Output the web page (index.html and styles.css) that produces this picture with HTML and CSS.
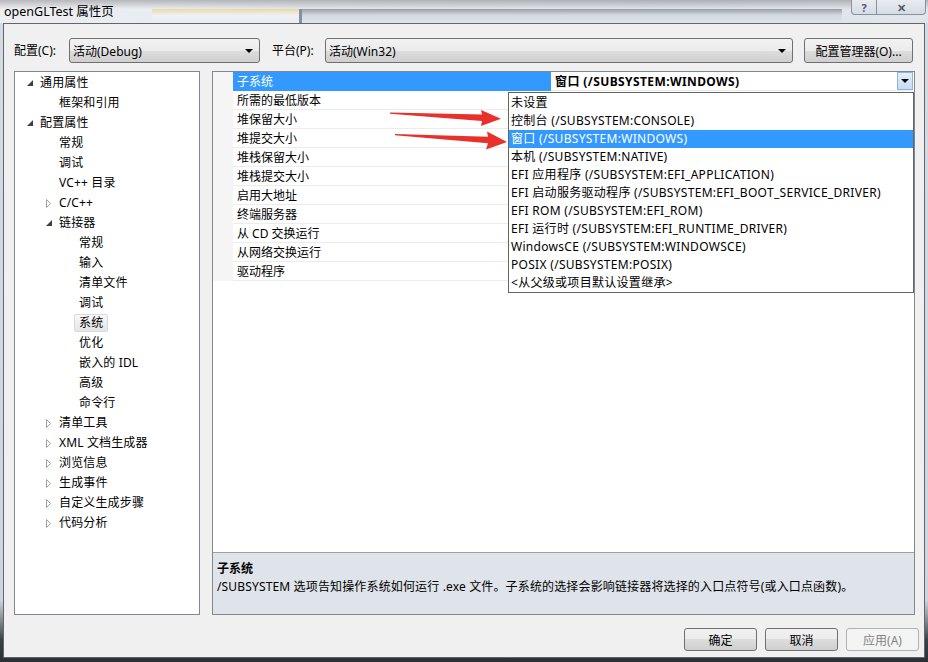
FILE: index.html
```html
<!DOCTYPE html>
<html>
<head>
<meta charset="utf-8">
<link rel="stylesheet" href="styles.css">
</head>
<body>
<div class="page">
  <div class="titlebar">
    <div class="title">openGLTest 属性页</div>
    <div class="glass-tabs">
      <span class="gtab gtab-a"></span>
      <span class="gtab gtab-b"></span>
    </div>
    <div class="capbtns">
      <span class="capbtn help">?</span>
      <span class="capbtn close">✕</span>
    </div>
  </div>
  <div class="frame">
    <div class="client">
      <div class="configrow">
        <span class="lbl lbl-cfg">配置(C):</span>
        <div class="combo combo-cfg"><span>活动(Debug)</span><i class="tri"></i></div>
        <span class="lbl lbl-plat">平台(P):</span>
        <div class="combo combo-plat"><span>活动(Win32)</span><i class="tri"></i></div>
        <div class="btn btn-mgr">配置管理器(O)...</div>
      </div>
      <div class="main">
        <div class="tree">
          <div class="node l1"><span class="tw"><svg width="6" height="6"><polygon points="6,0 6,6 0,6" fill="#404040"/></svg></span>通用属性</div>
          <div class="node l2n">框架和引用</div>
          <div class="node l1"><span class="tw"><svg width="6" height="6"><polygon points="6,0 6,6 0,6" fill="#404040"/></svg></span>配置属性</div>
          <div class="node l2n">常规</div>
          <div class="node l2n">调试</div>
          <div class="node l2n">VC++ 目录</div>
          <div class="node l2"><span class="tw"><svg width="5" height="9"><polygon points="0.5,0.5 4.5,4.5 0.5,8.5" fill="#fff" stroke="#a0a0a0"/></svg></span>C/C++</div>
          <div class="node l2"><span class="tw"><svg width="6" height="6"><polygon points="6,0 6,6 0,6" fill="#404040"/></svg></span>链接器</div>
          <div class="node l3">常规</div>
          <div class="node l3">输入</div>
          <div class="node l3">清单文件</div>
          <div class="node l3">调试</div>
          <div class="node l3"><span class="sel">系统</span></div>
          <div class="node l3">优化</div>
          <div class="node l3">嵌入的 IDL</div>
          <div class="node l3">高级</div>
          <div class="node l3">命令行</div>
          <div class="node l2"><span class="tw"><svg width="5" height="9"><polygon points="0.5,0.5 4.5,4.5 0.5,8.5" fill="#fff" stroke="#a0a0a0"/></svg></span>清单工具</div>
          <div class="node l2"><span class="tw"><svg width="5" height="9"><polygon points="0.5,0.5 4.5,4.5 0.5,8.5" fill="#fff" stroke="#a0a0a0"/></svg></span>XML 文档生成器</div>
          <div class="node l2"><span class="tw"><svg width="5" height="9"><polygon points="0.5,0.5 4.5,4.5 0.5,8.5" fill="#fff" stroke="#a0a0a0"/></svg></span>浏览信息</div>
          <div class="node l2"><span class="tw"><svg width="5" height="9"><polygon points="0.5,0.5 4.5,4.5 0.5,8.5" fill="#fff" stroke="#a0a0a0"/></svg></span>生成事件</div>
          <div class="node l2"><span class="tw"><svg width="5" height="9"><polygon points="0.5,0.5 4.5,4.5 0.5,8.5" fill="#fff" stroke="#a0a0a0"/></svg></span>自定义生成步骤</div>
          <div class="node l2"><span class="tw"><svg width="5" height="9"><polygon points="0.5,0.5 4.5,4.5 0.5,8.5" fill="#fff" stroke="#a0a0a0"/></svg></span>代码分析</div>
        </div>
        <div class="right">
          <div class="grid">
            <div class="prow">
              <span class="gut"></span>
              <span class="pname selrow">子系统</span>
              <span class="pval"><b>窗口 (/SUBSYSTEM:WINDOWS)</b><span class="ddbtn"><i class="tri"></i></span></span>
            </div>
            <div class="prow"><span class="gut"></span><span class="pname">所需的最低版本</span><span class="pval"></span></div>
            <div class="prow"><span class="gut"></span><span class="pname">堆保留大小</span><span class="pval"></span></div>
            <div class="prow"><span class="gut"></span><span class="pname">堆提交大小</span><span class="pval"></span></div>
            <div class="prow"><span class="gut"></span><span class="pname">堆栈保留大小</span><span class="pval"></span></div>
            <div class="prow"><span class="gut"></span><span class="pname">堆栈提交大小</span><span class="pval"></span></div>
            <div class="prow"><span class="gut"></span><span class="pname">启用大地址</span><span class="pval"></span></div>
            <div class="prow"><span class="gut"></span><span class="pname">终端服务器</span><span class="pval"></span></div>
            <div class="prow"><span class="gut"></span><span class="pname">从 CD 交换运行</span><span class="pval"></span></div>
            <div class="prow"><span class="gut"></span><span class="pname">从网络交换运行</span><span class="pval"></span></div>
            <div class="prow"><span class="gut"></span><span class="pname">驱动程序</span><span class="pval"></span></div>
          </div>
          <div class="desc">
            <div class="dtitle">子系统</div>
            <div class="dtext">/SUBSYSTEM 选项告知操作系统如何运行 .exe 文件。子系统的选择会影响链接器将选择的入口点符号(或入口点函数)。</div>
          </div>
        </div>
      </div>
      <div class="btnrow">
        <div class="btn btn-dlg">确定</div>
        <div class="btn btn-dlg">取消</div>
        <div class="btn btn-dlg disabled">应用(A)</div>
      </div>
    </div>
  </div>

  <div class="dropdown">
    <div class="ditem">未设置</div>
    <div class="ditem">控制台 (/SUBSYSTEM:CONSOLE)</div>
    <div class="ditem hl">窗口 (/SUBSYSTEM:WINDOWS)</div>
    <div class="ditem">本机 (/SUBSYSTEM:NATIVE)</div>
    <div class="ditem">EFI 应用程序 (/SUBSYSTEM:EFI_APPLICATION)</div>
    <div class="ditem">EFI 启动服务驱动程序 (/SUBSYSTEM:EFI_BOOT_SERVICE_DRIVER)</div>
    <div class="ditem">EFI ROM (/SUBSYSTEM:EFI_ROM)</div>
    <div class="ditem">EFI 运行时 (/SUBSYSTEM:EFI_RUNTIME_DRIVER)</div>
    <div class="ditem">WindowsCE (/SUBSYSTEM:WINDOWSCE)</div>
    <div class="ditem">POSIX (/SUBSYSTEM:POSIX)</div>
    <div class="ditem">&lt;从父级或项目默认设置继承&gt;</div>
  </div>

  <svg class="arrows" width="928" height="662" viewBox="0 0 928 662">
    <polygon points="390,112.4 482,114.4 481,110 501,118.8 481,126 482,121 390,113.8" fill="#e8312a"/>
    <polygon points="395,134 488,136.8 487,131.5 507,142 486,149.5 488,143.2 395,135.2" fill="#e8312a"/>
  </svg>
</div>
</body>
</html>
```

FILE: styles.css
```css
* { box-sizing: border-box; }
html, body { margin: 0; padding: 0; }
body {
  font-family: "Noto Sans", "Noto Sans CJK SC", sans-serif;
  font-size: 12px;
  color: #000;
  background: #5c6066;
}
.page {
  position: relative;
  width: 928px;
  height: 662px;
  overflow: hidden;
  display: flex;
  flex-direction: column;
  background: linear-gradient(to bottom, #d6dbe2 0, #cfd5dd 600px, #3d4147 640px, #2b2e33 662px);
}
.titlebar {
  height: 23px;
  flex: none;
  display: flex;
  align-items: center;
  position: relative;
  background:
    linear-gradient(to bottom, rgba(60,60,60,0.3) 0, rgba(255,255,255,0) 9px),
    linear-gradient(to right, #eceef1 0, #e9ecf0 150px, #e3e7ec 300px, #dde2ea 700px, #e2e6ec 928px);
}
.title {
  padding-left: 4px;
  font-size: 12.5px;
  line-height: 23px;
  color: #000;
  flex: none;
}
.glass-tabs {
  flex: 1;
  height: 23px;
  display: flex;
  align-items: flex-end;
  margin-left: 38px;
}
.gtab { display: block; height: 14px; }
.gtab-a { width: 150px; background: linear-gradient(to bottom, #e8d9a0 0, #eef0f4 6px, #e9edf3 14px); border-right: 3px solid #8890a0; }
.gtab-b { width: 540px; background: linear-gradient(to bottom, #9a9ea4 0, #d2d8e0 6px, #dfe4ec 14px); }
.capbtns {
  display: flex;
  align-self: flex-start;
  margin-right: 2px;
  flex: none;
}
.capbtn {
  display: flex;
  align-items: center;
  justify-content: center;
  height: 15px;
  border: 1px solid #8c9099;
  border-top: none;
  background: linear-gradient(to bottom, #e8ecf1, #d6dce4);
  color: #555a62;
  font-size: 11px;
  font-weight: bold;
}
.capbtn.help { width: 26px; border-radius: 0 0 0 4px; }
.capbtn.close { width: 49px; border-left: none; border-radius: 0 0 4px 0; }
.frame {
  flex: none;
  padding-left: 3px;
  height: 635px;
}
.client {
  width: 922px;
  height: 635px;
  background: #f0f0f0;
  border: 1px solid #60666e;
  display: flex;
  flex-direction: column;
}
.configrow {
  margin-top: 14px;
  height: 25px;
  display: flex;
  align-items: center;
  padding-left: 10px;
}
.lbl { flex: none; line-height: 25px; }
.lbl-cfg { width: 55px; }
.lbl-plat { width: 53px; margin-left: 12px; }
.combo {
  height: 25px;
  border: 1px solid #707070;
  border-radius: 3px;
  background: linear-gradient(to bottom, #f2f2f2 0, #ebebeb 50%, #dddddd 50%, #cfcfcf 100%);
  display: flex;
  align-items: center;
  justify-content: space-between;
  padding: 0 6px 0 3px;
  flex: none;
}
.combo-cfg { width: 191px; }
.combo-plat { width: 468px; }
.tri {
  display: block;
  width: 0;
  height: 0;
  border-left: 4px solid transparent;
  border-right: 4px solid transparent;
  border-top: 4px solid #000;
}
.btn {
  border: 1px solid #707070;
  border-radius: 3px;
  background: linear-gradient(to bottom, #f2f2f2 0, #ebebeb 50%, #dddddd 50%, #cfcfcf 100%);
  display: flex;
  align-items: center;
  justify-content: center;
  flex: none;
}
.btn-mgr { width: 109px; height: 25px; margin-left: 11px; }
.main {
  margin-top: 8px;
  padding-left: 10px;
  display: flex;
  gap: 12px;
  height: 544px;
  flex: none;
}
.tree {
  width: 186px;
  height: 544px;
  background: #fff;
  border: 1px solid #828790;
  padding-top: 1px;
}
.node {
  height: 20px;
  line-height: 20px;
  display: flex;
  align-items: center;
  white-space: nowrap;
  letter-spacing: 0.15px;
}
.tw {
  width: 15px;
  flex: none;
  display: flex;
  align-items: center;
  padding-left: 2px;
}
.l1 { padding-left: 10px; }
.l2 { padding-left: 29px; }
.l2n { padding-left: 44px; }
.l3 { padding-left: 64px; }
.sel {
  display: inline-block;
  margin-left: -5px;
  padding: 0 4px;
  height: 18px;
  line-height: 16px;
  border: 1px solid #d9d9d9;
  border-radius: 2px;
  background: linear-gradient(to bottom, #f8f8f8, #e5e5e5);
}
.right {
  width: 703px;
  height: 544px;
  border: 1px solid #828790;
  display: flex;
  flex-direction: column;
  background: #fff;
}
.grid { flex: 1; background: #fff; }
.prow {
  height: 19px;
  display: flex;
}
.gut { width: 20px; flex: none; background: #f5f5f5; }
.pname {
  width: 318px;
  flex: none;
  padding: 1px 0 0 4px;
  line-height: 18px;
  border-bottom: 1px solid #ececec;
  border-right: 1px solid #ececec;
  white-space: nowrap;
}
.pname.selrow { background: #3399ff; color: #fff; border-color: #3399ff; }
.pval {
  flex: 1;
  display: flex;
  align-items: center;
  justify-content: space-between;
  padding-left: 4px;
  padding-right: 1px;
  border-bottom: 1px solid #ececec;
}
.pval b { font-weight: bold; line-height: 18px; padding-top: 1px; letter-spacing: 0.4px; }
.ddbtn {
  width: 16px;
  height: 18px;
  border: 1px solid #8fb4d8;
  background: linear-gradient(to bottom, #e3eef9, #c6dcf2);
  display: flex;
  align-items: center;
  justify-content: center;
}
.desc {
  height: 62px;
  flex: none;
  border-top: 1px solid #a0a0a0;
  background: #dfe3ea;
  padding: 7px 0 0 4px;
}
.dtitle { font-weight: bold; line-height: 18px; }
.dtext { line-height: 18px; white-space: nowrap; letter-spacing: 0.15px; }
.btnrow {
  margin-top: 13px;
  display: flex;
  justify-content: flex-end;
  gap: 8px;
  padding-right: 5px;
}
.btn-dlg { width: 73px; height: 23px; }
.btn-dlg.disabled {
  border-color: #adb2b5;
  background: #f4f4f4;
  color: #838383;
}
.dropdown {
  position: absolute;
  left: 508px;
  top: 92px;
  width: 406px;
  border: 1px solid #646464;
  background: #fff;
  padding-top: 1px;
}
.ditem {
  height: 18px;
  line-height: 18px;
  padding-left: 2px;
  white-space: nowrap;
  letter-spacing: 0.3px;
}
.ditem.hl { background: #3399ff; color: #fff; }
.arrows {
  position: absolute;
  left: 0;
  top: 0;
  pointer-events: none;
}
```
